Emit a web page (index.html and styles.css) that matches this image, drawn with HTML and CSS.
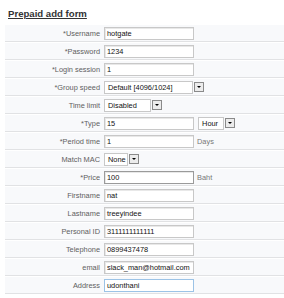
FILE: index.html
```html
<!DOCTYPE html>
<html lang="en">
<head>
    <meta charset="UTF-8">
    <title>Prepaid add form</title>
    <link rel="stylesheet" href="styles.css">
</head>
<body>
    <div class="title">Prepaid add form</div>
    <table class="form">
        <tr><td class="label">*Username</td><td><span class="input">hotgate</span></td></tr>
        <tr><td class="label">*Password</td><td><span class="input">1234</span></td></tr>
        <tr><td class="label">*Login session</td><td><span class="input">1</span></td></tr>
        <tr><td class="label">*Group speed</td><td>
            <span class="select wide"><span class="value">Default [4096/1024]</span><span class="btn"></span></span>
        </td></tr>
        <tr><td class="label">Time limit</td><td>
            <span class="select mid"><span class="value">Disabled</span><span class="btn"></span></span>
        </td></tr>
        <tr><td class="label">*Type</td><td>
            <span class="input">15</span>
            <span class="select small"><span class="value">Hour</span><span class="btn"></span></span>
        </td></tr>
        <tr><td class="label">*Period time</td><td><span class="input">1</span><span class="unit">Days</span></td></tr>
        <tr><td class="label">Match MAC</td><td>
            <span class="select tiny"><span class="value">None</span><span class="btn"></span></span>
        </td></tr>
        <tr><td class="label">*Price</td><td><span class="input dark">100</span><span class="unit">Baht</span></td></tr>
        <tr><td class="label">Firstname</td><td><span class="input">nat</span></td></tr>
        <tr><td class="label">Lastname</td><td><span class="input">treeyindee</span></td></tr>
        <tr><td class="label">Personal ID</td><td><span class="input">3111111111111</span></td></tr>
        <tr><td class="label">Telephone</td><td><span class="input">0899437478</span></td></tr>
        <tr><td class="label">email</td><td><span class="input">slack_man@hotmail.com</span></td></tr>
        <tr><td class="label">Address</td><td><span class="input focus">udonthani</span></td></tr>
    </table>
</body>
</html>
```

FILE: styles.css
```css
body {
    margin: 0;
    padding: 8px 0 0 5px;
    background: #fff;
    font-family: 'Liberation Sans', Arial, sans-serif;
    overflow: hidden;
}
.title {
    font-size: 9.6px;
    font-weight: bold;
    color: #333;
    text-decoration: underline;
    margin: 0 0 5px 3px;
    line-height: 11px;
}
.form {
    border-collapse: separate;
    border-spacing: 0 1px;
    width: 279px;
    background: #fff;
}
.form td {
    height: 16px;
    padding: 0;
    background: #f8f9fb;
    border-bottom: 1px solid #e1e2e4;
    font-size: 7.4px;
    white-space: nowrap;
    vertical-align: middle;
}
.form td.label {
    width: 95px;
    text-align: right;
    color: #606060;
    padding-right: 4px;
}
.input {
    display: inline-flex;
    align-items: center;
    box-sizing: border-box;
    width: 90px;
    height: 13px;
    padding-left: 2px;
    background: #fff;
    border: 1px solid #c8c8c8;
    box-shadow: inset 1px 1px 0 #e8e8e8;
    color: #111;
    vertical-align: middle;
    overflow: hidden;
}
.input.dark {
    border-color: #9a9a9a;
}
.input.focus {
    border-color: #9cc3e6;
    box-shadow: none;
}
.unit {
    color: #777;
    margin-left: 3px;
    vertical-align: middle;
}
.select {
    display: inline-flex;
    align-items: center;
    box-sizing: border-box;
    height: 13px;
    background: #fff;
    border: 1px solid #c8c8c8;
    vertical-align: middle;
    color: #111;
}
.select .value {
    flex: 1;
    padding-left: 3px;
    overflow: hidden;
}
.select .btn {
    box-sizing: border-box;
    width: 10px;
    height: 10px;
    margin: 0 0 0 2px;
    border: 1px solid #8a8a8a;
    background: #ececec;
    position: relative;
    margin-right: -12px;
}
.select .btn::after {
    content: "";
    position: absolute;
    left: 2px;
    top: 3px;
    border-left: 2px solid transparent;
    border-right: 2px solid transparent;
    border-top: 2px solid #000;
}
.select.wide { width: 89px; margin-right: 12px; }
.select.mid { width: 47px; margin-right: 12px; }
.select.small { width: 26px; margin-left: 2px; }
.select.tiny { width: 24px; }
```
